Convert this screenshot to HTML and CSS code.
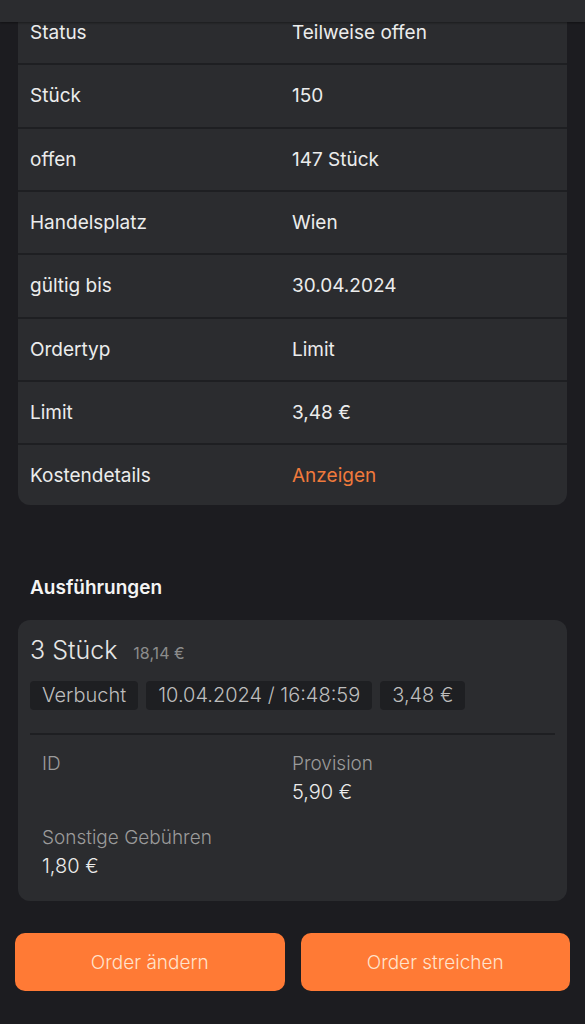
FILE: index.html
```html
<!DOCTYPE html>
<html>
<head>
	<title>Orderdetails</title>
	<meta charset="utf-8">
	<meta name="viewport" content="width=device-width, initial-scale=1">
	<link rel="stylesheet" href="styles.css">
</head>
<body>
	<div class="topbar"></div>
	<main class="page">
		<section class="card details">
			<div class="row"><span class="label">Status</span><span class="value">Teilweise offen</span></div>
			<div class="row"><span class="label">Stück</span><span class="value">150</span></div>
			<div class="row"><span class="label">offen</span><span class="value">147 Stück</span></div>
			<div class="row"><span class="label">Handelsplatz</span><span class="value">Wien</span></div>
			<div class="row"><span class="label">gültig bis</span><span class="value">30.04.2024</span></div>
			<div class="row"><span class="label">Ordertyp</span><span class="value">Limit</span></div>
			<div class="row"><span class="label">Limit</span><span class="value">3,48 €</span></div>
			<div class="row"><span class="label">Kostendetails</span><a class="value link" href="#">Anzeigen</a></div>
		</section>

		<h2 class="section-title">Ausführungen</h2>

		<section class="card execution">
			<div class="exec-head">
				<span class="qty">3 Stück</span>
				<span class="total">18,14 €</span>
			</div>
			<div class="chips">
				<span class="chip">Verbucht</span>
				<span class="chip">10.04.2024 / 16:48:59</span>
				<span class="chip">3,48 €</span>
			</div>
			<div class="facts">
				<div class="fact">
					<span class="fact-label">ID</span>
					<span class="fact-value"></span>
				</div>
				<div class="fact">
					<span class="fact-label">Provision</span>
					<span class="fact-value">5,90 €</span>
				</div>
				<div class="fact">
					<span class="fact-label">Sonstige Gebühren</span>
					<span class="fact-value">1,80 €</span>
				</div>
			</div>
		</section>
	</main>
	<div class="actions">
		<button type="button" class="btn">Order ändern</button>
		<button type="button" class="btn">Order streichen</button>
	</div>
</body>
</html>
```

FILE: styles.css
```css
body {
	margin: 0;
	background-color: #1c1c20;
	color: #f2f2f2;
	font-family: Inter, "Noto Sans", sans-serif;
	font-size: 19px;
}

.topbar {
	position: absolute;
	top: 0;
	left: 0;
	right: 0;
	height: 22px;
	background-color: #2b2c2f;
	box-shadow: 0 1px 2px rgba(0, 0, 0, 0.4);
	z-index: 2;
}

.page {
	padding: 0 18px;
}

.card {
	background-color: #2b2c2f;
	border-radius: 12px;
}

.details {
	padding-top: 2px;
}

.details .row {
	display: grid;
	grid-template-columns: 262px 1fr;
	align-items: center;
	height: 61.33px;
	padding: 0 12px;
	border-bottom: 2px solid #1e1f22;
}

.details .row:last-child {
	border-bottom: none;
	height: 60px;
}

.label,
.value {
	color: #ececec;
}

.link {
	color: #ef7a3c;
	text-decoration: none;
}

.section-title {
	margin: 71px 0 20px 12px;
	font-size: 19px;
	line-height: 24px;
	font-weight: 600;
	color: #f4f4f4;
}

.execution {
	padding: 15px 12px 20px;
}

.exec-head {
	display: flex;
	align-items: baseline;
	gap: 16px;
	line-height: 30px;
}

.qty {
	font-size: 25px;
	font-weight: 300;
	color: #e6e6e6;
}

.total {
	font-size: 16px;
	color: #8c8c8c;
}

.chips {
	display: flex;
	gap: 8px;
	margin-top: 13px;
	padding-bottom: 23px;
	border-bottom: 2px solid #1e1f22;
}

.chip {
	background-color: #1e1f22;
	border-radius: 4px;
	padding: 0 12px;
	height: 29px;
	line-height: 29px;
	font-size: 20px;
	color: #bdbdbd;
	font-weight: 300;
}

.facts {
	display: grid;
	grid-template-columns: 250px 1fr;
	row-gap: 17px;
	padding: 15px 12px 0;
}

.fact {
	display: flex;
	flex-direction: column;
}

.fact-label {
	color: #9b9b9b;
	font-weight: 300;
	line-height: 28px;
}

.fact-value {
	color: #ececec;
	font-size: 20px;
	font-weight: 300;
	line-height: 29px;
	min-height: 29px;
}

.actions {
	display: flex;
	gap: 16px;
	padding: 32px 15px 0;
}

.btn {
	flex: 1;
	height: 58px;
	border: none;
	border-radius: 10px;
	background-color: #ff7a35;
	color: #ffe3cc;
	font-family: Inter, "Noto Sans", sans-serif;
	font-size: 19px;
	font-weight: 300;
	cursor: pointer;
}
```
